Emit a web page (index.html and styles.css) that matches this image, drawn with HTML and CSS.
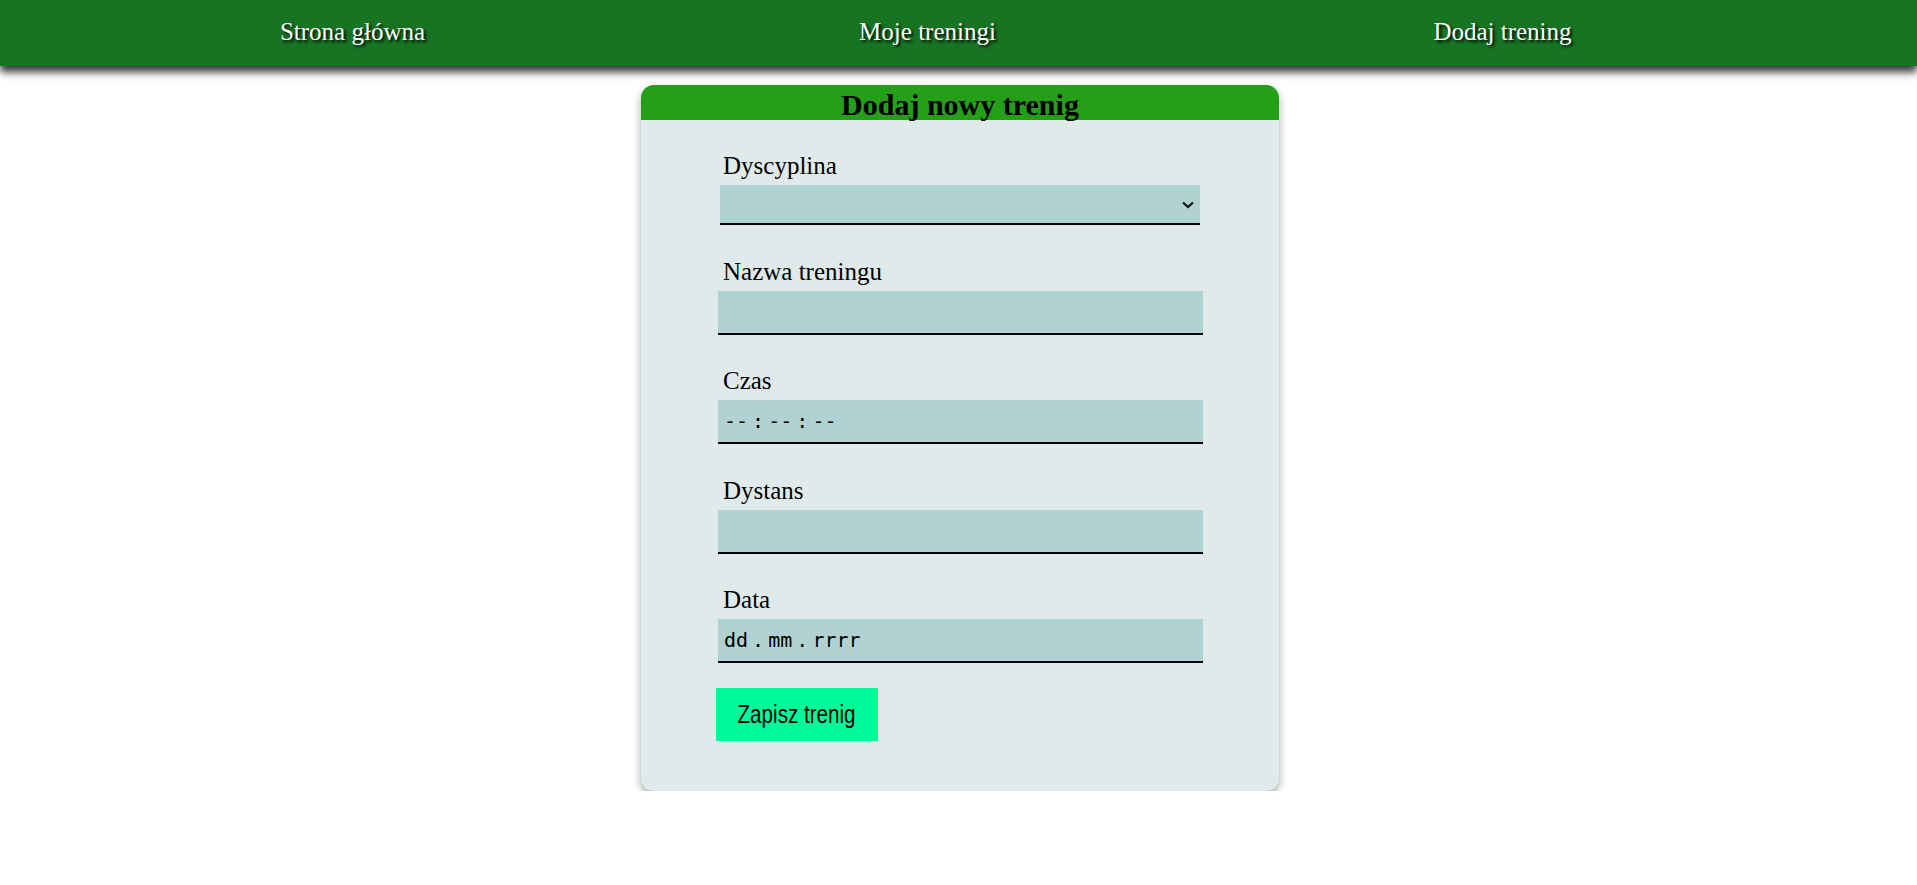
FILE: index.html
```html
<!DOCTYPE html>
<html lang="pl">
<head>
<meta charset="utf-8">
<title>Dodaj trening</title>
<link rel="stylesheet" href="styles.css">
</head>
<body>
<nav class="topnav">
  <a class="topnav-link" href="#">Strona główna</a>
  <a class="topnav-link" href="#">Moje treningi</a>
  <a class="topnav-link" href="#">Dodaj trening</a>
</nav>
<main class="card">
  <div class="card-header"><h2 class="card-title">Dodaj nowy trenig</h2></div>
  <form class="form">
    <div class="group">
      <label class="label" for="discipline">Dyscyplina</label>
      <div class="select-wrap">
        <select class="select" id="discipline"><option value=""></option></select>
        <svg class="select-arrow" width="12" height="8" viewBox="0 0 12 8" aria-hidden="true"><path d="M1 1.5 L6 6 L11 1.5" fill="none" stroke="#111" stroke-width="2.2"/></svg>
      </div>
    </div>
    <div class="group">
      <label class="label" for="name">Nazwa treningu</label>
      <input class="field" id="name" type="text">
    </div>
    <div class="group">
      <label class="label" for="time">Czas</label>
      <input class="field field-mono" id="time" type="text" placeholder="-- : -- : --">
    </div>
    <div class="group">
      <label class="label" for="distance">Dystans</label>
      <input class="field" id="distance" type="text">
    </div>
    <div class="group group-last">
      <label class="label" for="date">Data</label>
      <input class="field field-mono" id="date" type="text" placeholder="dd . mm . rrrr">
    </div>
    <button class="submit" type="button"><span class="submit-text">Zapisz trenig</span></button>
  </form>
</main>
</body>
</html>
```

FILE: styles.css
```css
* { box-sizing: border-box; }

html, body {
  margin: 0;
  padding: 0;
  background: #ffffff;
}

body {
  font-family: "Liberation Serif", "Times New Roman", serif;
  color: #000;
}

.topnav {
  display: grid;
  grid-template-columns: repeat(3, 575px);
  padding-left: 65px;
  padding-bottom: 3px;
  height: 66px;
  align-items: center;
  background: #177422;
  box-shadow: 0 6px 8px rgba(0, 0, 0, 0.8);
  position: relative;
  z-index: 1;
}

.topnav-link {
  text-align: center;
  color: #fff;
  text-decoration: none;
  font-size: 25px;
  line-height: 29px;
  text-shadow: 2px 2px 3px #000;
}

.card {
  width: 638px;
  margin: 19px 0 0 calc(50% - 317.5px);
  background: #e0eaeb;
  border-radius: 13px;
  box-shadow: 0 4px 8px rgba(0, 0, 0, 0.35);
  padding-bottom: 50px;
}

.card-header {
  height: 35px;
  background: #259e18;
  border-radius: 13px 13px 0 0;
}

.card-title {
  margin: 0;
  font-size: 30px;
  line-height: 40px;
  font-weight: bold;
  text-align: center;
  position: relative;
}

.form {
  padding: 31px 76px 0 77px;
  display: flex;
  flex-direction: column;
  align-items: flex-start;
}

.group {
  width: 100%;
  margin-bottom: 31.5px;
}

.group-last {
  margin-bottom: 24.5px;
}

.label {
  display: block;
  font-size: 25px;
  line-height: 29px;
  padding-left: 5px;
  margin-bottom: 5px;
}

.select-wrap {
  position: relative;
  width: 480px;
  margin-left: 2px;
}

.select {
  display: block;
  width: 100%;
  height: 40px;
  appearance: none;
  -webkit-appearance: none;
  background-color: #b1d2d2;
  border: none;
  border-bottom: 2px solid #000;
  border-radius: 0;
  outline: none;
  font-size: 16px;
}

.select-arrow {
  position: absolute;
  right: 6px;
  top: 16px;
  pointer-events: none;
}

.field {
  display: block;
  width: 100%;
  height: 44px;
  background: #b1d2d2;
  border: none;
  border-bottom: 2px solid #000;
  border-radius: 0;
  outline: none;
  padding: 0 6px;
  font-size: 16px;
  font-family: "Liberation Serif", serif;
}

.field-mono {
  font-family: "DejaVu Sans Mono", "Liberation Mono", monospace;
  font-size: 20px;
  word-spacing: -8px;
}

.field-mono::placeholder {
  color: #000;
  opacity: 1;
  word-spacing: -8px;
}

.submit {
  margin-left: -2px;
  width: 162px;
  height: 53px;
  background: #00fa9a;
  border: none;
  border-radius: 0;
  font-family: "Liberation Sans", Arial, sans-serif;
  font-size: 25px;
  color: #000;
  padding: 0;
  display: flex;
  align-items: center;
  justify-content: center;
}

.submit-text {
  display: inline-block;
  transform: scaleX(0.825);
  white-space: nowrap;
}
```
